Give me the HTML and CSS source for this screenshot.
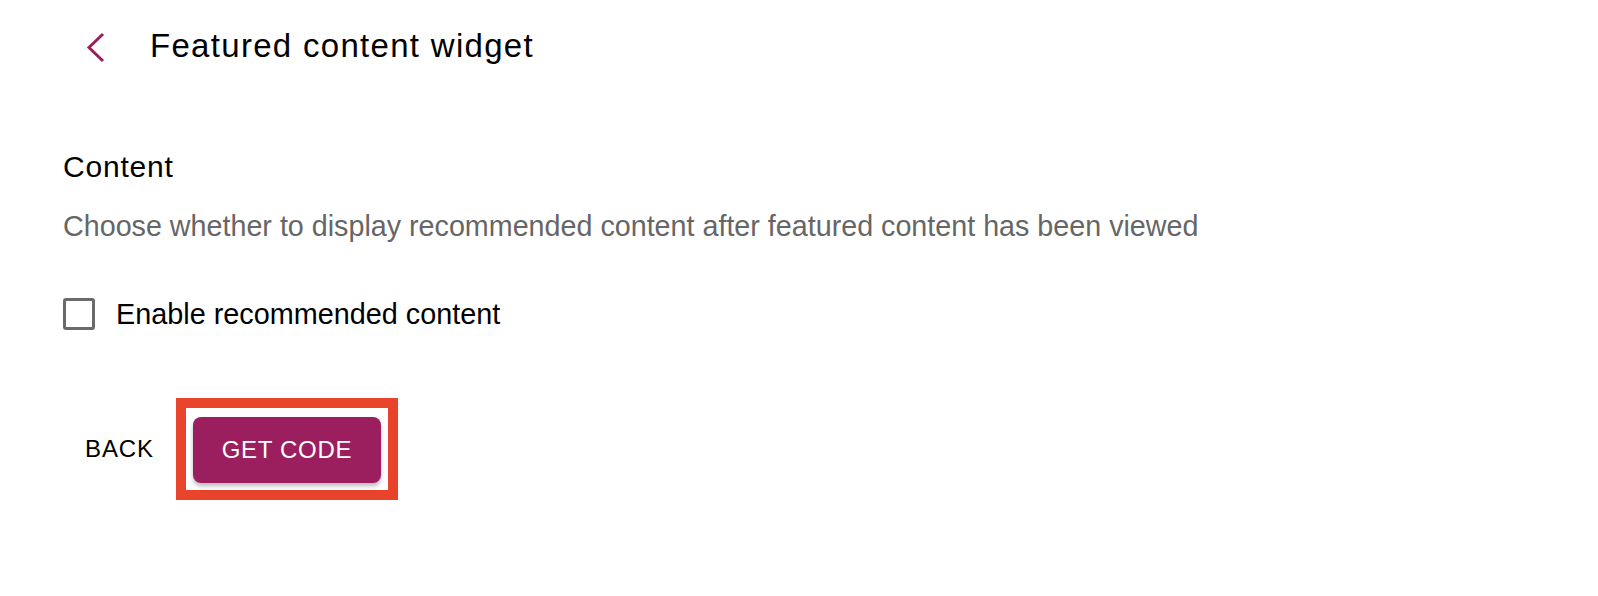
FILE: index.html
```html
<!DOCTYPE html>
<html lang="en">
<head>
<meta charset="utf-8">
<title>Featured content widget</title>
<link rel="stylesheet" href="styles.css">
</head>
<body>
<div class="page">
  <header class="topbar">
    <button class="back-icon" aria-label="Back">
      <svg width="20" height="34" viewBox="0 0 20 34"><polyline points="17,5 3,18.5 17,32" fill="none" stroke="#9b1f5f" stroke-width="3"/></svg>
    </button>
    <h1 class="title">Featured content widget</h1>
  </header>
  <section class="section">
    <h2 class="section-title">Content</h2>
    <p class="section-desc">Choose whether to display recommended content after featured content has been viewed</p>
    <label class="check-row">
      <span class="checkbox"></span>
      <span class="check-label">Enable recommended content</span>
    </label>
  </section>
  <div class="actions">
    <button class="text-btn">BACK</button>
    <div class="highlight">
      <button class="primary-btn">GET CODE</button>
    </div>
  </div>
</div>
</body>
</html>
```

FILE: styles.css
```css
* { box-sizing: border-box; }
html, body { margin: 0; padding: 0; background: #ffffff; }
body { font-family: "Liberation Sans", Arial, sans-serif; color: #000; }

.page { padding-left: 63px; }

.topbar {
  display: flex;
  align-items: center;
  height: 40px;
  margin-top: 26px;
}
.back-icon {
  display: flex;
  align-items: center;
  justify-content: center;
  margin-left: 23px;
  width: 20px;
  height: 34px;
  padding: 0;
  border: 0;
  background: transparent;
}
.back-icon svg { display: block; }
.title {
  margin: 0 0 0 44px;
  font-size: 33px;
  font-weight: 400;
  line-height: 40px;
  letter-spacing: 1.3px;
}

.section { margin-top: 83px; }
.section-title {
  margin: 0;
  font-size: 30px;
  font-weight: 400;
  line-height: 36px;
  letter-spacing: 0.8px;
}
.section-desc {
  margin: 23px 0 0;
  font-size: 28.7px;
  line-height: 36px;
  color: #666666;
}
.check-row {
  display: flex;
  align-items: center;
  gap: 21px;
  margin-top: 52px;
  height: 36px;
}
.checkbox {
  width: 32px;
  height: 32px;
  border: 3px solid #6a6a6a;
  border-radius: 3px;
  flex: none;
}
.check-label {
  font-size: 28.8px;
  line-height: 36px;
}

.actions {
  display: flex;
  align-items: center;
  gap: 22px;
  margin-top: 66px;
  padding-left: 22px;
}
.text-btn {
  padding: 0;
  border: 0;
  background: transparent;
  font-family: "Liberation Sans", Arial, sans-serif;
  font-size: 24px;
  line-height: 36px;
  letter-spacing: 0.9px;
  color: #000;
}
.highlight {
  border: 10px solid #e8432b;
  padding: 9px 7px 7px 7px;
}
.primary-btn {
  display: block;
  width: 188px;
  height: 66px;
  border: 0;
  border-radius: 8px;
  background: #9b1f5f;
  color: #fff;
  font-family: "Liberation Sans", Arial, sans-serif;
  font-size: 24px;
  letter-spacing: 0.7px;
  box-shadow: 0 3px 4px rgba(0, 0, 0, 0.28);
}
```
